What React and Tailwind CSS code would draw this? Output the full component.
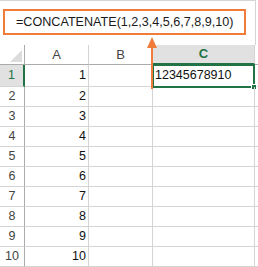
const rows = [1, 2, 3, 4, 5, 6, 7, 8, 9, 10];

const Corner = () => (
  <div className="relative w-[25px] shrink-0 border-r border-b border-[#ababab]">
    <svg className="absolute left-[10px] top-[5px]" width="12" height="12" viewBox="0 0 12 12">
      <polygon points="12,0 12,12 0,12" fill="#dcdcdc" />
    </svg>
  </div>
);

const Row = ({ n }) => {
  const first = n === 1;
  return (
    <div className={`flex ${first ? 'h-[22px]' : 'h-[20px]'}`}>
      <div
        className={`w-[25px] shrink-0 flex items-center justify-center border-b text-[12.5px] ${
          first
            ? 'bg-[#e1e1e1] text-[#217346] border-r-2 border-r-[#217346] border-b-[#d4d4d4]'
            : 'text-[#444] border-r border-[#ababab] border-b-[#d4d4d4]'
        }`}
      >
        {n}
      </div>
      <div className="w-[64px] shrink-0 flex items-center justify-end pr-[2px] border-r border-b border-[#d4d4d4] text-[12.5px] text-[#111]">
        {n}
      </div>
      <div className="w-[64px] shrink-0 border-r border-b border-[#d4d4d4]" />
      <div className="relative w-[102px] shrink-0 flex items-center pl-[2px] border-r border-b border-[#d4d4d4] text-[12.5px] text-[#111]">
        {first && (
          <>
            12345678910
            <div className="absolute left-[-1px] top-[-1px] right-[-1px] bottom-[-2px] border-2 border-[#217346]">
              <div className="absolute right-[-4px] bottom-[-4px] w-[6px] h-[6px] bg-[#217346] border border-white" />
            </div>
          </>
        )}
      </div>
      <div className="flex-1 border-b border-[#d4d4d4]" />
    </div>
  );
};

export default function App() {
  return (
    <div className="relative w-[258px] h-[267px] overflow-hidden bg-white font-['Liberation_Sans',Arial,sans-serif]">
      <div className="h-[45px] w-[256px] border-t border-r border-[#d4d4d4] pt-[8px] pl-[3px]">
        <div className="w-[243px] h-[26px] border-2 border-[#f07c3b] flex items-center pl-[11px] text-[12.6px] text-[#1a1a1a]">
          =CONCATENATE(1,2,3,4,5,6,7,8,9,10)
        </div>
      </div>

      <div className="flex h-[20px]">
        <Corner />
        <div className="w-[64px] shrink-0 flex items-center justify-center border-r border-[#d4d4d4] border-b border-b-[#ababab] text-[13px] text-[#444]">
          A
        </div>
        <div className="w-[64px] shrink-0 flex items-center justify-center border-r border-[#d4d4d4] border-b border-b-[#ababab] text-[13px] text-[#444]">
          B
        </div>
        <div className="w-[102px] shrink-0 flex items-center justify-center bg-[#e1e1e1] border-r border-[#d4d4d4] border-b-2 border-b-[#217346] text-[13px] font-bold text-[#217346]">
          C
        </div>
        <div className="flex-1 border-b border-[#ababab]" />
      </div>

      {rows.map((n) => (
        <Row key={n} n={n} />
      ))}

      <svg className="absolute left-[146px] top-[36px]" width="12" height="53" viewBox="0 0 12 53">
        <polygon points="6,1 1,12 11,12" fill="#f07c3b" />
        <rect x="5" y="10" width="2" height="43" fill="#f07c3b" />
      </svg>
    </div>
  );
}
